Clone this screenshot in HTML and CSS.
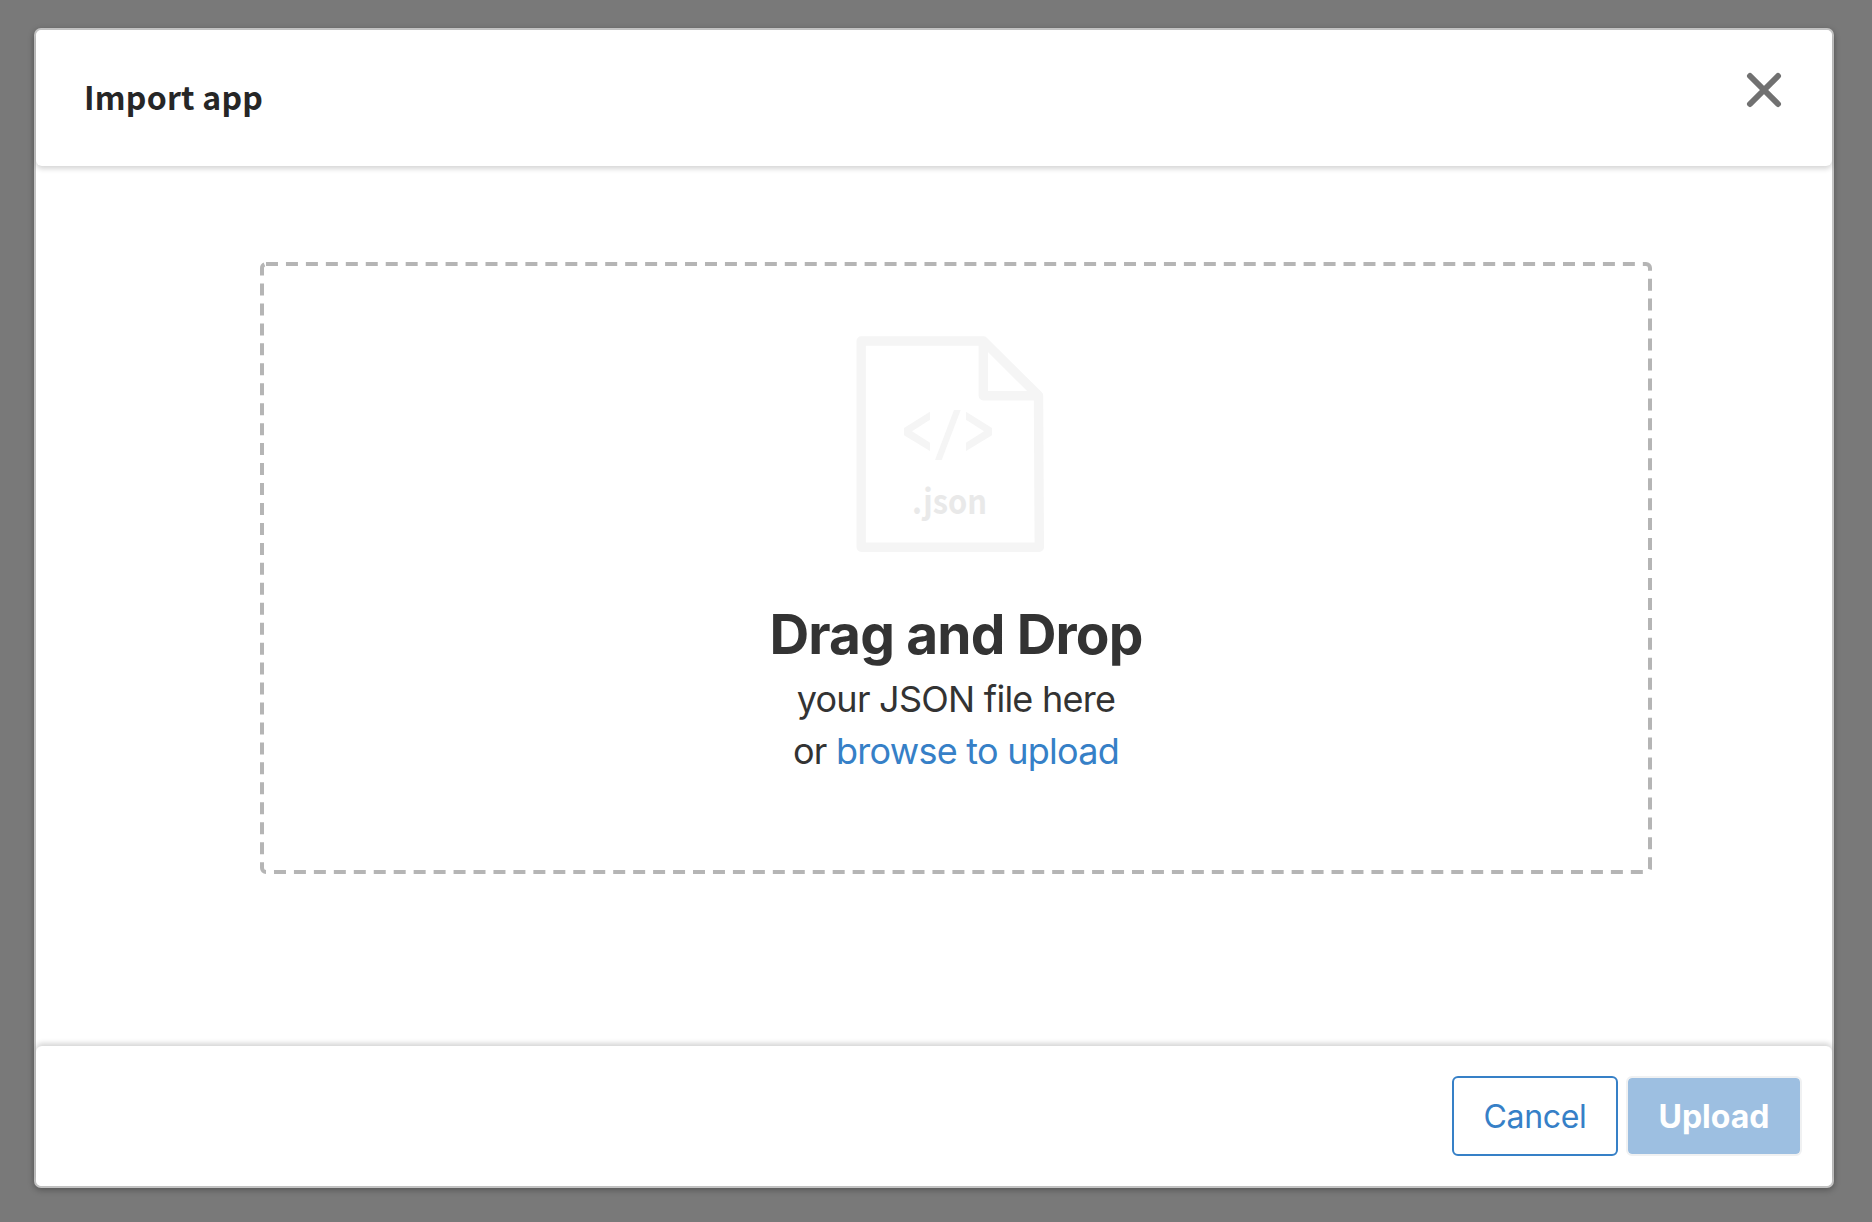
FILE: index.html
```html
<!DOCTYPE html>
<html lang="en">
<head>
<meta charset="utf-8">
<title>Import app</title>
<link rel="stylesheet" href="styles.css">
</head>
<body>
<div class="modal" role="dialog" aria-labelledby="title">
  <header class="header">
    <h1 class="title" id="title">Import app</h1>
    <button class="close" aria-label="Close">
      <svg width="40" height="40" viewBox="0 0 40 40"><path d="M6 6L34 34M34 6L6 34" fill="none" stroke="#717171" stroke-width="6" stroke-linecap="round"/></svg>
    </button>
  </header>
  <main class="body">
    <div class="drop">
      <svg class="dashes" width="1392" height="612" viewBox="0 0 1392 612"><rect x="2" y="2" width="1388" height="608" rx="4" fill="none" stroke="#b5b5b5" stroke-width="4" stroke-dasharray="12 7.954"/></svg>
      <svg class="file" width="220" height="250" viewBox="0 0 220 250">
        <path d="M21.2 21H143.5L198.5 75.7L199.3 227.3H21.2ZM143.3 21V75.7H198.5" fill="none" stroke="#f5f5f5" stroke-width="9.4" stroke-linejoin="round"/>
        <path d="M90 91.7V99.7L72 111.3L90 122.7V131L64 115.3V108ZM114 90H120.7L101.7 140H95ZM126 91.7L152 108V115.3L126 131V122.7L144 111.3L126 99.7Z" fill="#f5f5f5"/>
        <text class="ext" x="72" y="194" textLength="75" lengthAdjust="spacingAndGlyphs">.json</text>
      </svg>
      <h2 class="lead">Drag and Drop</h2>
      <p class="line">your JSON file here</p>
      <p class="line">or <a class="browse">browse to upload</a></p>
    </div>
  </main>
  <footer class="footer">
    <button class="btn cancel">Cancel</button>
    <button class="btn upload" disabled>Upload</button>
  </footer>
</div>
</body>
</html>
```
FILE: styles.css
```css
* { box-sizing: border-box; margin: 0; }
body {
  height: 1222px;
  padding: 28px 38px 34px 34px;
  background: #797979;
  font-family: Inter, sans-serif;
  color: #333;
  overflow: hidden;
}
.modal {
  display: flex;
  flex-direction: column;
  height: 1160px;
  border: 2px solid #c4c4c4;
  border-radius: 7px;
  background: #fff;
  box-shadow: 0 2px 6px rgba(0, 0, 0, .3);
}
.header {
  display: flex;
  justify-content: space-between;
  height: 136px;
  padding: 40px 48px 0 48px;
  border-radius: 6px;
  background: #fff;
  box-shadow: 0 3px 5px rgba(0, 0, 0, .16);
}
.title {
  font: 700 32px/52px "Noto Sans CJK SC", sans-serif;
  letter-spacing: .22px;
  color: #262626;
}
.close {
  width: 40px;
  height: 40px;
  padding: 0;
  border: 0;
  background: none;
}
.close svg { display: block; }
.body { flex: 1; padding: 96px 180px 0 224px; }
.drop {
  position: relative;
  display: flex;
  flex-direction: column;
  align-items: center;
  height: 612px;
  padding-top: 58px;
}
.dashes { position: absolute; inset: 0; }
.file { margin-right: 12px; flex: none; }
.ext {
  font: 700 34px "Noto Sans CJK SC", sans-serif;
  fill: #e9e9e9;
}
.lead {
  margin-top: 25px;
  font-size: 55px;
  line-height: 78px;
  font-weight: 700;
  letter-spacing: -.85px;
}
.line { font-size: 36px; line-height: 52px; letter-spacing: -.74px; }
.browse { color: #3680c7; }
.footer {
  display: flex;
  justify-content: flex-end;
  gap: 8px;
  height: 140px;
  padding: 30px;
  border-radius: 6px;
  background: #fff;
  box-shadow: 0 -3px 5px rgba(0, 0, 0, .16);
}
.btn {
  height: 80px;
  padding: 2px 0 0;
  border-radius: 6px;
  font: 400 32px/74px Inter, sans-serif;
}
.cancel {
  width: 166px;
  border: 2px solid #3680c7;
  background: #fff;
  color: #3680c7;
  letter-spacing: -.3px;
}
.upload {
  width: 176px;
  border: 2px solid #f0f1f2;
  background: #9dbfe1;
  background-clip: padding-box;
  color: #fff;
  font-weight: 700;
}
```
